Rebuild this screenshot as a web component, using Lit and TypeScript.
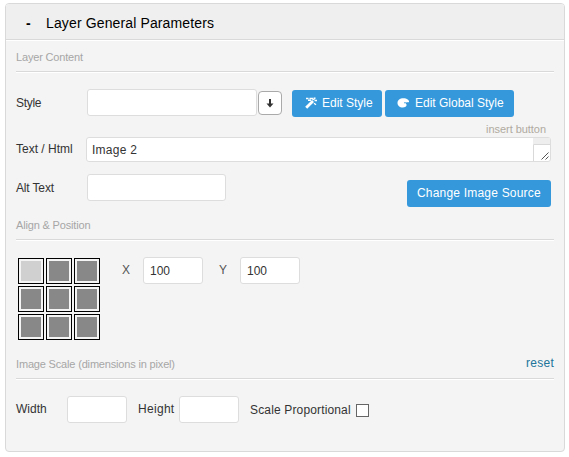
import { LitElement, html, css, svg } from "lit";
import { customElement, property } from "lit/decorators.js";
import { classMap } from "lit/directives/class-map.js";

const wand = svg`
  <path d="M1.2 10.8 8 4" stroke="#fff" stroke-width="2.800" fill="none"/>
  <path d="M1 1.500h2.500M4.500 1.500h3.500M3 3.300h3M8.500 1.500l2-.5M9.500 3.500h2.500M9 6.300l2 1.500M7.500 3l2.500-1.500" stroke="#fff" stroke-width="1.400" fill="none"/>`;
const palette = svg`
  <path fill="#fff" fill-rule="evenodd" d="M6.300 1.200C3 1.200.5 3.200.5 5.900c0 2.600 2.200 4.600 5.200 4.600 2.400 0 3.900-1 3.900-2.400 0-.9-.7-1.200-.7-1.900 0-.6.6-.9 1.500-.9.7 0 1.200.2 1.600-.2.500-1.800-2-3.900-5.700-3.900Z"/>
  <circle cx="8" cy="5.800" r=".8" fill="#3498db"/>`;

@customElement("section-heading")
export class SectionHeading extends LitElement {
  @property() label = "";
  @property() action = "";

  static styles = css`
    :host {
      display: flex;
      justify-content: space-between;
      align-items: center;
      height: 31px;
      box-sizing: border-box;
      padding-top: 3px;
      border-bottom: 1px solid #d9d9d9;
      box-shadow: 0 1px 0 #fff;
      font-size: 11px;
      letter-spacing: -0.17px;
      color: #a6a6a6;
    }
    .action {
      font-size: 12px;
      letter-spacing: 0.25px;
      color: #21759b;
      margin-top: -3px;
    }
  `;

  render() {
    return html`<span>${this.label}</span>
      ${this.action ? html`<span class="action">${this.action}</span>` : ""}`;
  }
}

@customElement("app-root")
export class AppRoot extends LitElement {
  static styles = css`
    :host {
      display: block;
      height: 457px;
      overflow: hidden;
      background: #fff;
      box-sizing: border-box;
      padding: 3px 4px 0 5px;
      font: 12px/15px "Liberation Sans", Arial, sans-serif;
      color: #333;
      white-space: nowrap;
    }
    .panel {
      box-sizing: border-box;
      height: 449px;
      border: 1px solid #d9d9d9;
      border-radius: 4px;
      background: #f4f4f4;
      overflow: hidden;
    }
    .title {
      display: flex;
      align-items: center;
      box-sizing: border-box;
      height: 36px;
      padding: 3px 0 0 20px;
      border-bottom: 1px solid #d9d9d9;
      box-shadow: 0 1px 0 #fff;
      background: #efefef;
      font-size: 14px;
      letter-spacing: 0.13px;
      color: #000;
    }
    .minus {
      width: 20px;
      font-weight: bold;
    }
    .body {
      padding: 1px 10px 0;
    }
    .row {
      display: flex;
      align-items: flex-start;
    }
    .row > span {
      padding-top: 6px;
    }
    .field {
      box-sizing: border-box;
      height: 27px;
      border: 1px solid #ddd;
      border-radius: 3px;
      background: #fff;
      padding: 6px 6px;
    }
    .style-row { padding-top: 17px; height: 28px; }
    .style-row .label { width: 71px; padding-top: 7px; letter-spacing: -0.3px; }
    .style-row .field { width: 170px; }
    .pick {
      box-sizing: border-box;
      width: 24px;
      height: 24px;
      margin: 2px 10px 0 1px;
      border: 1px solid #aaa;
      border-radius: 4px;
      background: #fff;
    }
    .pick svg { display: block; }
    .btn {
      display: flex;
      align-items: center;
      box-sizing: border-box;
      height: 27px;
      margin-top: 1px;
      padding: 0 10px 1px;
      border-radius: 3px;
      background: #3498db;
      color: #fff;
    }
    .btn svg { width: 13px; height: 12px; flex: none; }
    .edit { width: 90px; padding-left: 13px; gap: 4px; margin-right: 3px; }
    .global { width: 129px; padding-left: 12px; gap: 5px; }
    .insert {
      height: 20px;
      padding: 5px 8px 0 0;
      box-sizing: border-box;
      text-align: right;
      font-size: 11px;
      letter-spacing: -0.05px;
      color: #b0aaa0;
    }
    .text-row .label { width: 70px; padding-top: 5px; }
    .area {
      display: flex;
      justify-content: space-between;
      width: 465px;
      height: 25px;
      padding: 0 0 0 5px;
      letter-spacing: 0.25px;
    }
    .area span { padding-top: 5px; }
    .grip {
      box-sizing: border-box;
      width: 17px;
      height: 23px;
      border-top: 6px solid #eee;
    }
    .grip svg { display: block; }
    .alt-row { padding-top: 12px; height: 35px; }
    .alt-row .label { width: 71px; padding-top: 7px; letter-spacing: -0.15px; }
    .alt-row .field { width: 139px; }
    .change { width: 144px; margin: 6px 0 0 181px; letter-spacing: 0.2px; }
    .align-row { padding-top: 17px; height: 91px; }
    .grid {
      display: grid;
      grid-template-columns: repeat(3, 26px);
      grid-auto-rows: 26px;
      gap: 2px;
      margin: 1px 0 0 2px;
    }
    .cell {
      box-sizing: border-box;
      border: 1px solid #000;
      padding: 2px;
      background: #888 content-box;
    }
    .cell.on { background: #d0d0d0 content-box; }
    .x { width: 21px; margin-left: 22px; color: #555; }
    .y { width: 21px; margin-left: 16px; color: #555; }
    .num { width: 60px; }
    .scale-row { padding-top: 17px; }
    .scale-row .w { width: 51px; }
    .scale-row .h { width: 41px; margin-left: 11px; letter-spacing: 0.3px; }
    .scale-row .s { width: 106px; margin-left: 11px; padding-top: 7px; letter-spacing: 0.15px; }
    .box {
      box-sizing: border-box;
      width: 13px;
      height: 13px;
      margin-top: 8px;
      border: 1px solid #666;
      background: #fff;
    }
  `;

  render() {
    return html`<div class="panel">
      <div class="title"><span class="minus">-</span><span>Layer General Parameters</span></div>
      <div class="body">
        <section-heading label="Layer Content"></section-heading>
        <div class="row style-row">
          <span class="label">Style</span>
          <div class="field"></div>
          <div class="pick">
            <svg width="22" height="22" viewBox="0 0 22 22">
              <path d="M11 7v6" stroke="#333" stroke-width="2" />
              <path d="M7.500 11.500h7L11 15.500Z" fill="#333" />
            </svg>
          </div>
          <div class="btn edit"><svg viewBox="0 0 13 12">${wand}</svg>Edit Style</div>
          <div class="btn global"><svg viewBox="0 0 13 12">${palette}</svg>Edit Global Style</div>
        </div>
        <div class="insert">insert button</div>
        <div class="row text-row">
          <span class="label">Text / Html</span>
          <div class="field area">
            <span>Image 2</span>
            <div class="grip">
              <svg width="17" height="17" viewBox="0 0 17 17" fill="none">
                <path d="M.5 17V.5H17" stroke="#d9d9d9" />
                <path d="M8.500 15.500l7-7M12.500 15.500l3-3" stroke="#555" />
              </svg>
            </div>
          </div>
        </div>
        <div class="row alt-row">
          <span class="label">Alt Text</span>
          <div class="field"></div>
          <div class="btn change">Change Image Source</div>
        </div>
        <section-heading label="Align &amp; Position"></section-heading>
        <div class="row align-row">
          <div class="grid">
            ${Array.from({ length: 9 }, (_, i) => html`<div class=${classMap({ cell: true, on: i === 0 })}></div>`)}
          </div>
          <span class="x">X</span>
          <div class="field num">100</div>
          <span class="y">Y</span>
          <div class="field num">100</div>
        </div>
        <section-heading label="Image Scale (dimensions in pixel)" action="reset"></section-heading>
        <div class="row scale-row">
          <span class="w">Width</span>
          <div class="field num"></div>
          <span class="h">Height</span>
          <div class="field num"></div>
          <span class="s">Scale Proportional</span>
          <div class="box"></div>
        </div>
      </div>
    </div>`;
  }
}
